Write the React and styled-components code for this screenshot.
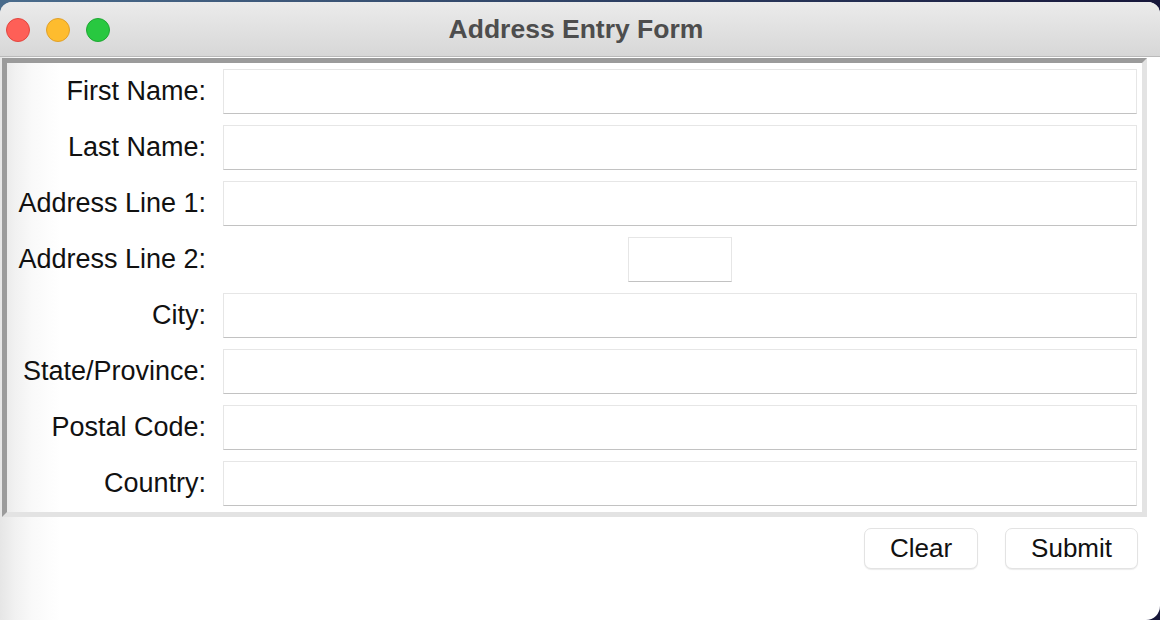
import React from "react";
import styled, { createGlobalStyle } from "styled-components";

const GlobalStyle = createGlobalStyle`
  html, body {
    margin: 0;
    padding: 0;
    width: 1160px;
    height: 620px;
    overflow: hidden;
    background: linear-gradient(to right, #4a6c8c, #2a3a5e 60%, #17173a);
    font-family: "Liberation Sans", Arial, sans-serif;
  }
  * {
    box-sizing: border-box;
  }
`;

const Window = styled.div`
  margin-top: 2px;
  height: 618px;
  border-radius: 12px 12px 14px 0;
  overflow: hidden;
  display: flex;
  flex-direction: column;
  background: linear-gradient(
    to right,
    #e6e6e6 0px,
    #f1f1f1 15px,
    #f9f9f9 32px,
    #ffffff 60px
  );
`;

const TitleBar = styled.div`
  position: relative;
  height: 55px;
  flex: none;
  display: flex;
  align-items: center;
  justify-content: center;
  background: linear-gradient(to bottom, #ebebeb, #d7d7d7);
  border-bottom: 1px solid #bababa;
`;

const Lights = styled.div`
  position: absolute;
  left: 6px;
  top: 16px;
  display: flex;
  gap: 16px;
`;

const Light = styled.span`
  width: 24px;
  height: 24px;
  border-radius: 50%;
  background: ${(p) => p.color};
  border: 1px solid ${(p) => p.edge};
`;

const Title = styled.div`
  font-size: 26.5px;
  font-weight: bold;
  color: #4d4d4d;
  margin-right: 8px;
`;

const Body = styled.div`
  flex: 1;
  padding: 1px 13px 0 2px;
  display: flex;
  flex-direction: column;
`;

const Frame = styled.div`
  border: 5px solid;
  border-color: #9b9b9b #e3e3e3 #e3e3e3 #9b9b9b;
  padding: 6px 5px 6px 12px;
  display: grid;
  grid-template-columns: 187px 1fr;
  grid-auto-rows: 45px;
  column-gap: 17px;
  row-gap: 11px;
`;

const Label = styled.label`
  font-size: 27px;
  color: #111;
  text-align: right;
  align-self: center;
  white-space: nowrap;
  justify-self: end;
`;

const Entry = styled.input`
  height: 45px;
  width: ${(p) => (p.narrow ? "104px" : "100%")};
  justify-self: center;
  border: 1px solid #e6e6e6;
  border-bottom-color: #c2c2c2;
  background: #fff;
  outline: 0;
  font-size: 22px;
  font-family: inherit;
  padding: 0 6px;
`;

const ButtonRow = styled.div`
  display: flex;
  justify-content: flex-end;
  gap: 27px;
  padding: 11px 9px 0 0;
`;

const Button = styled.button`
  height: 41px;
  padding: 0 25px;
  font-size: 26px;
  font-family: inherit;
  color: #111;
  background: #fff;
  border: 1px solid #e3e3e3;
  border-radius: 7px;
  box-shadow: 0 1px 1px rgba(0, 0, 0, 0.08);
`;

const fields = [
  { label: "First Name:" },
  { label: "Last Name:" },
  { label: "Address Line 1:" },
  { label: "Address Line 2:", narrow: true },
  { label: "City:" },
  { label: "State/Province:" },
  { label: "Postal Code:" },
  { label: "Country:" },
];

const App = () => {
  return (
    <>
      <GlobalStyle />
      <Window>
        <TitleBar>
          <Lights>
            <Light color="#fe5f57" edge="#e2463f" />
            <Light color="#febc2e" edge="#e0a02a" />
            <Light color="#28c840" edge="#1fa733" />
          </Lights>
          <Title>Address Entry Form</Title>
        </TitleBar>
        <Body>
          <Frame>
            {fields.map((f) => (
              <React.Fragment key={f.label}>
                <Label>{f.label}</Label>
                <Entry narrow={f.narrow} />
              </React.Fragment>
            ))}
          </Frame>
          <ButtonRow>
            <Button>Clear</Button>
            <Button>Submit</Button>
          </ButtonRow>
        </Body>
      </Window>
    </>
  );
};

export default App;
